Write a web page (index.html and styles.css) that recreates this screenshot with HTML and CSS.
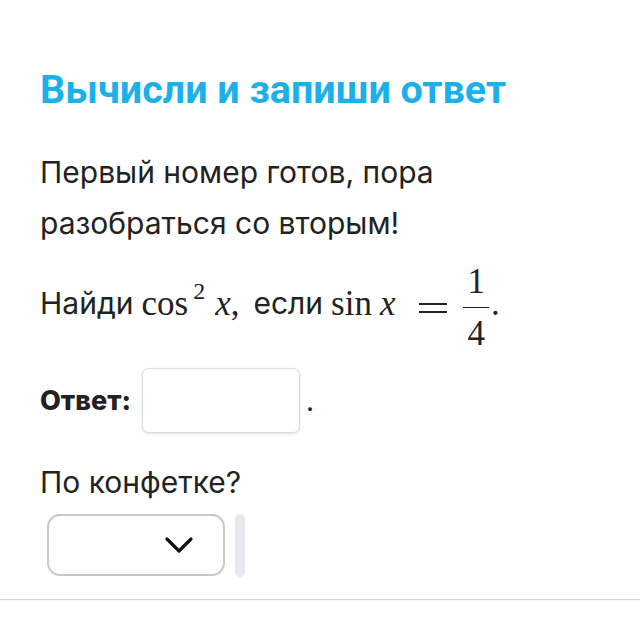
FILE: index.html
```html
<!DOCTYPE html>
<html lang="ru">
<head>
  <meta charset="UTF-8">
  <title>Вычисли и запиши ответ</title>
  <link rel="stylesheet" href="styles.css">
</head>
<body>
  <div class="task">
    <h1 class="title">Вычисли и запиши ответ</h1>

    <p class="text">Первый номер готов, пора разобраться со вторым!</p>

    <p class="text formula">
      <span>Найди</span>
      <span class="math">cos<sup>2</sup><i>x</i>,</span>
      <span class="word">если</span>
      <span class="math">sin<i>x</i><span class="eq"></span><span class="frac"><span class="num">1</span><span class="den">4</span></span>.</span>
    </p>

    <div class="answer">
      <strong>Ответ:</strong>
      <input type="text" class="answer-input">
      <span class="dot">.</span>
    </div>

    <p class="text question">По конфетке?</p>

    <div class="pick">
      <div class="select">
        <svg width="30" height="18" viewBox="0 0 30 18">
          <path d="M3 3 L15 15 L27 3" fill="none" stroke="#111" stroke-width="3.2" stroke-linecap="round" stroke-linejoin="round"/>
        </svg>
      </div>
      <div class="handle"></div>
    </div>
  </div>
  <div class="footer-line"></div>
</body>
</html>
```

FILE: styles.css
```css
* {
  box-sizing: border-box;
  margin: 0;
  padding: 0;
}

body {
  font-family: Inter, 'Noto Sans', sans-serif;
  background: #fff;
  color: #222;
}

.task {
  padding: 66px 0 0 40px;
  height: 599px;
}

.title {
  font-family: Roboto, Inter, sans-serif;
  font-size: 39.5px;
  font-weight: 700;
  color: #1ab0ea;
  line-height: 48px;
  margin-bottom: 33px;
}

.text {
  font-size: 30px;
  line-height: 51px;
  width: 440px;
}

/* строка с формулой */
.formula {
  margin-top: 8px;
  width: auto;
  display: flex;
  align-items: center;
}

.formula .word {
  margin-left: 14px;
}

.math {
  font-family: 'Liberation Serif', 'DejaVu Serif', serif;
  font-size: 35px;
  line-height: 51px;
  display: inline-flex;
  align-items: center;
  margin-left: 8px;
}

.math sup {
  font-size: 24px;
  line-height: 24px;
  position: relative;
  top: -13px;
  margin-left: 5px;
}

.math i {
  font-style: italic;
  margin-left: 8px;
}

.math sup + i {
  margin-left: 10px;
}

.math .eq {
  width: 28px;
  height: 10px;
  border-top: 2px solid #222;
  border-bottom: 2px solid #222;
  margin: 8px 16px 0 24px;
}

.frac {
  display: inline-flex;
  flex-direction: column;
  align-items: center;
  line-height: 33px;
  margin-top: 8px;
  margin-right: 2px;
}

.frac .num {
  border-bottom: 1px solid #222;
  padding: 0 4px 9px;
}

.frac .den {
  padding-top: 9px;
}

.answer {
  display: flex;
  align-items: center;
  margin-top: 18px;
  gap: 8px;
}

.answer strong {
  font-size: 27px;
  font-weight: 800;
}

.answer-input {
  width: 158px;
  height: 65px;
  border: 1px solid #ddd;
  border-radius: 7px;
  box-shadow: 0 1px 3px rgba(0, 0, 0, 0.12);
  margin-left: 3px;
}

.dot {
  font-size: 28px;
  margin-left: -2px;
}

.question {
  margin-top: 24px;
}

.pick {
  display: flex;
  gap: 10px;
  margin: 6px 0 0 7px;
}

.select {
  width: 178px;
  height: 62px;
  border: 2px solid #c8c8c8;
  border-radius: 13px;
  display: flex;
  align-items: center;
  justify-content: flex-end;
  padding-right: 29px;
}

.handle {
  width: 10px;
  height: 63px;
  background: #e6e9ee;
  border-radius: 5px;
}

.footer-line {
  height: 2px;
  background: #d9d9d9;
  border-bottom: 1px solid #f5f5f5;
}
```
